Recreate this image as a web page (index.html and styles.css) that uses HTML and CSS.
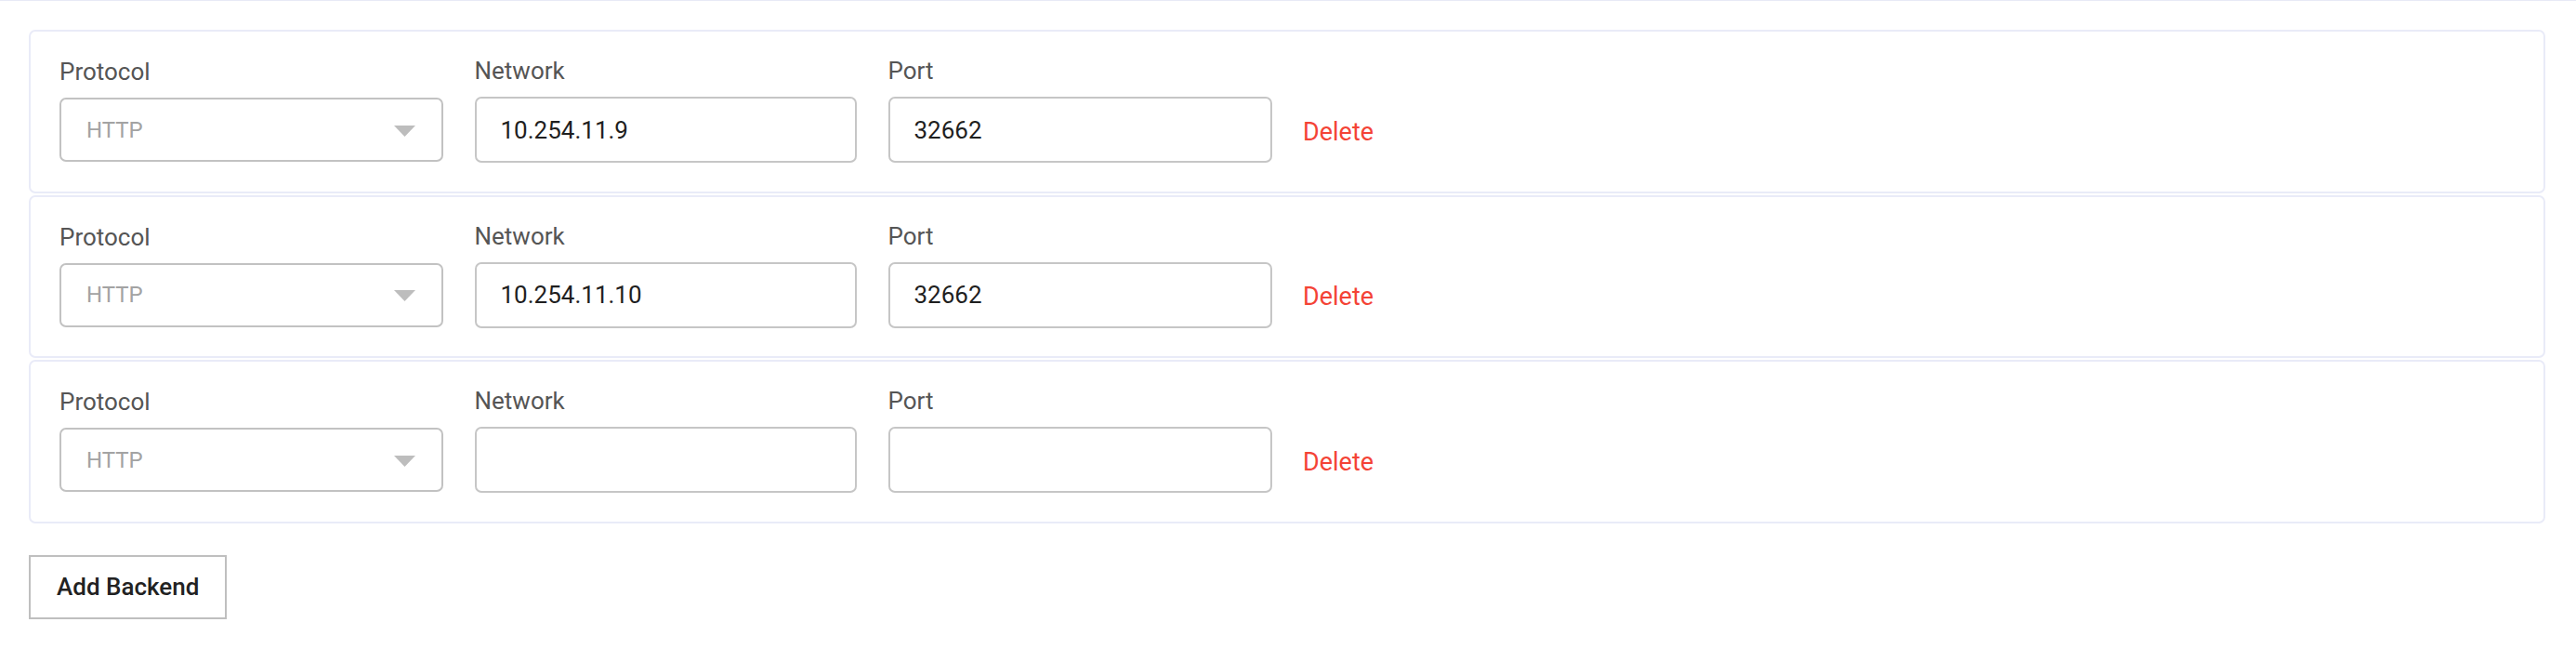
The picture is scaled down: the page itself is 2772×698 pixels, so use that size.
FILE: index.html
```html
<!DOCTYPE html>
<html lang="en">
<head>
<meta charset="utf-8">
<title>Backends</title>
<link rel="stylesheet" href="styles.css">
</head>
<body>
<div class="page">
  <div class="backend-list">
    <div class="backend-card">
      <div class="backend-row">
        <div class="field">
          <label class="field-label">Protocol</label>
          <div class="select">
            <span class="select-value">HTTP</span>
            <svg class="select-arrow" width="23" height="12" viewBox="0 0 23 12"><polygon points="0,0 23,0 11.5,12" fill="#bdbdbd"/></svg>
          </div>
        </div>
        <div class="field">
          <label class="field-label">Network</label>
          <input class="text-input network" type="text" value="10.254.11.9">
        </div>
        <div class="field">
          <label class="field-label">Port</label>
          <input class="text-input" type="text" value="32662">
        </div>
        <a class="delete-link">Delete</a>
      </div>
    </div>
    <div class="backend-card">
      <div class="backend-row">
        <div class="field">
          <label class="field-label">Protocol</label>
          <div class="select">
            <span class="select-value">HTTP</span>
            <svg class="select-arrow" width="23" height="12" viewBox="0 0 23 12"><polygon points="0,0 23,0 11.5,12" fill="#bdbdbd"/></svg>
          </div>
        </div>
        <div class="field">
          <label class="field-label">Network</label>
          <input class="text-input network" type="text" value="10.254.11.10">
        </div>
        <div class="field">
          <label class="field-label">Port</label>
          <input class="text-input" type="text" value="32662">
        </div>
        <a class="delete-link">Delete</a>
      </div>
    </div>
    <div class="backend-card">
      <div class="backend-row">
        <div class="field">
          <label class="field-label">Protocol</label>
          <div class="select">
            <span class="select-value">HTTP</span>
            <svg class="select-arrow" width="23" height="12" viewBox="0 0 23 12"><polygon points="0,0 23,0 11.5,12" fill="#bdbdbd"/></svg>
          </div>
        </div>
        <div class="field">
          <label class="field-label">Network</label>
          <input class="text-input network" type="text" value="">
        </div>
        <div class="field">
          <label class="field-label">Port</label>
          <input class="text-input" type="text" value="">
        </div>
        <a class="delete-link">Delete</a>
      </div>
    </div>
  </div>
  <button class="add-button" type="button">Add Backend</button>
</div>
</body>
</html>
```
FILE: styles.css
```css
html, body {
  margin: 0;
  padding: 0;
  background: #ffffff;
}

body {
  font-family: Roboto, "Liberation Sans", Arial, sans-serif;
  color: #222222;
}

.page {
  border-top: 1px solid #e8eaf6;
  padding: 31px 33px 0 31px;
  display: flex;
  flex-direction: column;
  align-items: flex-start;
}

.backend-list {
  align-self: stretch;
  display: flex;
  flex-direction: column;
  gap: 2px;
}

.backend-card {
  box-sizing: border-box;
  height: 175.5px;
  border: 2px solid #e9ebf8;
  border-radius: 7px;
  padding: 27px 0 0 31px;
}

.backend-row {
  display: flex;
  align-items: flex-end;
  gap: 33.5px;
}

.field {
  display: flex;
  flex-direction: column;
  gap: 12.5px;
}

.field-label {
  font-size: 26px;
  line-height: 30.5px;
  color: #555555;
}

.select {
  box-sizing: border-box;
  width: 413px;
  height: 69px;
  margin-bottom: 1px;
  border: 2px solid #c2c2c2;
  border-radius: 7px;
  padding: 0 28px 0 27px;
  display: flex;
  align-items: center;
  justify-content: space-between;
}

.select-value {
  font-size: 24px;
  line-height: 28px;
  color: #a3a3a3;
}

.select-arrow {
  display: block;
  margin-top: 2px;
}

.text-input {
  box-sizing: border-box;
  width: 413px;
  height: 71px;
  border: 2px solid #c6c6c6;
  border-radius: 7px;
  padding: 0 26px;
  margin: 0;
  font-family: Roboto, "Liberation Sans", Arial, sans-serif;
  font-size: 26px;
  color: #1f1f1f;
  background: #ffffff;
  outline: none;
}

.text-input.network {
  width: 411.5px;
}

.delete-link {
  height: 71px;
  box-sizing: border-box;
  padding-top: 4px;
  display: flex;
  align-items: center;
  font-size: 27px;
  color: #f44336;
  cursor: pointer;
}

.add-button {
  box-sizing: border-box;
  margin-top: 34px;
  height: 69px;
  padding: 0 28px;
  border: 2px solid #bfbfbf;
  border-radius: 0;
  background: #ffffff;
  font-family: Roboto, "Liberation Sans", Arial, sans-serif;
  font-size: 26px;
  font-weight: 500;
  color: #222222;
  cursor: pointer;
}
```
